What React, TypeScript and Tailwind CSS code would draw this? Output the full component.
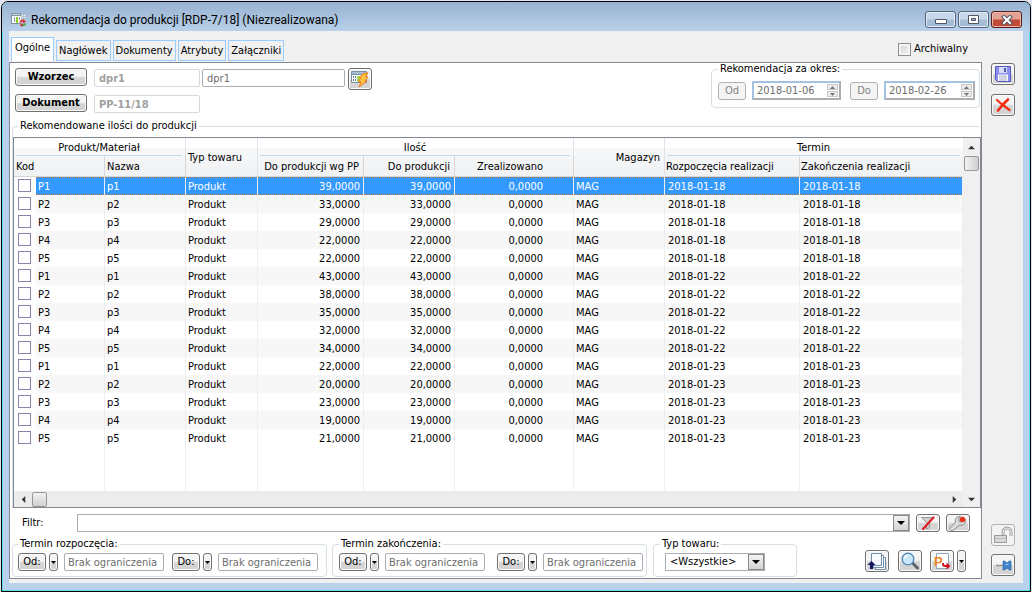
import React, { useState } from 'react';
import clsx from 'clsx';

const rows = [
  { kod: 'P1', wgPP: '39,0000', ilosc: '39,0000', start: '2018-01-18', end: '2018-01-18' },
  { kod: 'P2', wgPP: '33,0000', ilosc: '33,0000', start: '2018-01-18', end: '2018-01-18' },
  { kod: 'P3', wgPP: '29,0000', ilosc: '29,0000', start: '2018-01-18', end: '2018-01-18' },
  { kod: 'P4', wgPP: '22,0000', ilosc: '22,0000', start: '2018-01-18', end: '2018-01-18' },
  { kod: 'P5', wgPP: '22,0000', ilosc: '22,0000', start: '2018-01-18', end: '2018-01-18' },
  { kod: 'P1', wgPP: '43,0000', ilosc: '43,0000', start: '2018-01-22', end: '2018-01-22' },
  { kod: 'P2', wgPP: '38,0000', ilosc: '38,0000', start: '2018-01-22', end: '2018-01-22' },
  { kod: 'P3', wgPP: '35,0000', ilosc: '35,0000', start: '2018-01-22', end: '2018-01-22' },
  { kod: 'P4', wgPP: '32,0000', ilosc: '32,0000', start: '2018-01-22', end: '2018-01-22' },
  { kod: 'P5', wgPP: '34,0000', ilosc: '34,0000', start: '2018-01-22', end: '2018-01-22' },
  { kod: 'P1', wgPP: '22,0000', ilosc: '22,0000', start: '2018-01-23', end: '2018-01-23' },
  { kod: 'P2', wgPP: '20,0000', ilosc: '20,0000', start: '2018-01-23', end: '2018-01-23' },
  { kod: 'P3', wgPP: '23,0000', ilosc: '23,0000', start: '2018-01-23', end: '2018-01-23' },
  { kod: 'P4', wgPP: '19,0000', ilosc: '19,0000', start: '2018-01-23', end: '2018-01-23' },
  { kod: 'P5', wgPP: '21,0000', ilosc: '21,0000', start: '2018-01-23', end: '2018-01-23' },
];

const tabs = ['Nagłówek', 'Dokumenty', 'Atrybuty', 'Załączniki'];

const raised = 'rounded-[3px] border border-[#707070] bg-linear-to-b from-[#f4f4f4] from-45% to-[#d4d4d4] to-55% shadow-[inset_0_0_0_1px_#fafafa]';
const disabledBtn = 'h-[18px] w-7 rounded-[3px] border border-[#adb2b5] bg-[#f4f4f4] text-[#838383]';
const groupBox = 'min-w-0 rounded-[4px] border border-[#d5dfe5]';
const dateField = 'h-[18px] w-[100px] rounded-[2px] border border-[#abadb3] pl-[3px] placeholder:text-[#6d6d6d]';

function Arrow({ dir, className = 'h-2 w-2 text-black' }: { dir: 'up' | 'down' | 'left' | 'right'; className?: string }) {
  const paths = { up: 'M0 6 4 2 8 6Z', down: 'M0 2h8L4 6Z', left: 'M6 0v8L2 4Z', right: 'M2 0v8l4-4Z' };
  return (
    <svg viewBox="0 0 8 8" className={clsx('shrink-0', className)} fill="currentColor">
      <path d={paths[dir]} />
    </svg>
  );
}

function IconButton({ label, children, className = 'h-[22px]' }: { label: string; children: React.ReactNode; className?: string }) {
  return (
    <button aria-label={label} className={clsx('flex w-6 shrink-0 items-center justify-center', raised, className)}>
      {children}
    </button>
  );
}

function DropButton({ label, className = 'h-[18px]' }: { label: string; className?: string }) {
  return (
    <button aria-label={label} className={clsx('flex w-[9px] shrink-0 items-center justify-center', raised, className)}>
      <svg viewBox="0 0 5 3" className="h-[3px] w-[5px]"><path d="M0 0h5L2.5 3Z" /></svg>
    </button>
  );
}

function DateSpinner({ label, value, className }: { label: string; value: string; className: string }) {
  return (
    <div className={clsx('flex h-[19px] border-2 border-[#abadb3] border-t-[#a4c3e3] border-l-[#a4c3e3] bg-white p-px', className)}>
      <input aria-label={label} defaultValue={value} className="min-w-0 flex-1 pl-[2px] text-[#6d6d6d] outline-none" />
      <div className="flex w-[11px] flex-col gap-px">
        <button aria-label={`${label} +`} className="flex flex-1 items-center justify-center border border-[#c8c8c8] bg-[#ececec]">
          <svg viewBox="0 0 5 3" className="h-[3px] w-[5px]" fill="#777"><path d="M0 3h5L2.5 0Z" /></svg>
        </button>
        <button aria-label={`${label} -`} className="flex flex-1 items-center justify-center border border-[#c8c8c8] bg-[#ececec]">
          <svg viewBox="0 0 5 3" className="h-[3px] w-[5px]" fill="#777"><path d="M0 0h5L2.5 3Z" /></svg>
        </button>
      </div>
    </div>
  );
}

function RangeGroup({ title, className, gap }: { title: string; className: string; gap: string }) {
  return (
    <fieldset className={clsx(groupBox, 'h-[39px] w-[315px]', className)}>
      <legend className="px-[2px] leading-3">{title}</legend>
      <div className={clsx('flex items-center pt-[3px]', gap)}>
        <div className="flex">
          <button className={clsx('h-[18px] w-7', raised)}>Od:</button>
          <DropButton label={`${title} od`} className="mr-1.5 ml-[3px] h-[18px]" />
          <input aria-label={`${title} od data`} placeholder="Brak ograniczenia" className={dateField} />
        </div>
        <div className="flex">
          <button className={clsx('h-[18px] w-7', raised)}>Do:</button>
          <DropButton label={`${title} do`} className="mr-1.5 ml-[3px] h-[18px]" />
          <input aria-label={`${title} do data`} placeholder="Brak ograniczenia" className={dateField} />
        </div>
      </div>
    </fieldset>
  );
}

function WindowIcon() {
  return (
    <svg viewBox="0 0 16 14" className="h-[14px] w-4">
      <path d="M0 0h10v3H0Z" fill="#8296aa" />
      <path d="M1 1h8v1H1Z" fill="#c9d6e2" />
      <path d="M0 3h10v8H0Z" fill="#fff" />
      <path d="M0 3h1v8H0ZM0 10h10v1H0Z" fill="#7f90a2" />
      <path d="M3 4h1v5H3ZM8 4h1v3H8Z" fill="#8795a5" />
      <path d="M5 4h2v6H5Z" fill="#8ccf2c" />
      <path d="M10 1h5v6h-5Z" fill="#b3c1cf" />
      <path d="M11 2h1v1h-1ZM13 2h1v1h-1ZM11 4h1v1h-1ZM13 4h1v1h-1Z" fill="#f4f7fa" />
      <path d="M9 9.500Q10 7 13 8" fill="none" stroke="#d8383c" strokeWidth="2" />
      <path d="M12 6l3 2.500-3 2Z" fill="#d8383c" />
      <path d="M14.500 10.500Q13 13 10.500 12" fill="none" stroke="#4fa84a" strokeWidth="2" />
      <path d="M11.500 10v4L8.500 12Z" fill="#c93a3a" />
    </svg>
  );
}

function GenerateIcon() {
  return (
    <svg viewBox="0 0 18 18" className="h-[18px] w-[18px]">
      <path d="M.500 1.500h15v11H.500Z" fill="#fff" stroke="#7890a8" />
      <path d="M1 2h14v2H1Z" fill="#a8bfd6" />
      <path d="M1 4h14v1H1Z" fill="#7890a8" />
      <path d="M2 6h1v2H2ZM2 9h1v2H2ZM4 6h1v2H4ZM4 9h1v2H4Z" fill="#5b7896" />
      <path d="M6 6h3v6H6Z" fill="#a3d64a" />
      <path d="M12 3.500 17 3l-2.500 4h2.500l-3 4h2L8 17l2-5H7.500l2.500-4H8.500Z" fill="#fdc345" stroke="#ee7d1c" strokeLinejoin="round" />
    </svg>
  );
}

function SaveIcon() {
  return (
    <svg viewBox="0 0 18 18" className="h-[18px] w-[18px]">
      <path d="M1.500 1.500h15v15h-13l-2-2Z" fill="#8a8ff0" stroke="#5458b8" />
      <path d="M5 2h8v6H5Z" fill="#d9dcf8" />
      <path d="M10 3h2v4h-2Z" fill="#4d55ad" />
      <path d="M4 9.500h10V16H4Z" fill="#fff" />
      <path d="M5 11h8M5 13h8M5 15h8" stroke="#a5a8c4" />
    </svg>
  );
}

function CloseIcon() {
  return (
    <svg viewBox="0 0 18 18" className="h-[18px] w-[18px]" fill="none" stroke="#f22b12" strokeLinecap="round">
      <path d="M3 4 8 8.500 15.500 14" strokeWidth="2.200" />
      <path d="M14 3.500 9 8.500 4 14.500" strokeWidth="2.600" />
    </svg>
  );
}

function FilterOffIcon() {
  return (
    <svg viewBox="0 0 16 14" className="h-[14px] w-4">
      <path d="M1.500 1.500h12L9.500 6.500v5L6.500 13V6.500Z" fill="#cfcfcf" stroke="#9a9a9a" />
      <path d="M3 13 13.500 1.500" stroke="#e02424" strokeWidth="2.200" strokeLinecap="round" />
    </svg>
  );
}

function WrenchIcon() {
  return (
    <svg viewBox="0 0 20 16" className="h-4 w-5">
      <path d="M2 12.500 7.500 7.500C6.500 3.500 9 1 12.500 1.500L10.500 4l1 3 3.500-.5 2-2.500c2 4-1.500 7-5.500 6L5 15.500C3 16 1 14.500 2 12.500Z" fill="#dcdcdc" stroke="#8a8a8a" />
      <circle cx="14.500" cy="4.500" r="2.800" fill="#e8341c" />
    </svg>
  );
}

function LockIcon() {
  return (
    <svg viewBox="0 0 20 18" className="h-[18px] w-5">
      <path d="M10 9V6a4 4 0 0 1 8 0v4" fill="none" stroke="#a3a3a3" strokeWidth="3" />
      <path d="M10 9V6a4 4 0 0 1 8 0v4" fill="none" stroke="#ededed" />
      <path d="M1.500 9.500h12v7h-12Z" fill="#d9d9d9" stroke="#989898" />
      <path d="M2 12h11v1H2Z" fill="#bdbdbd" />
    </svg>
  );
}

function PinIcon() {
  return (
    <svg viewBox="0 0 18 14" className="h-[14px] w-[18px]">
      <path d="M2 7.500h7" stroke="#9a9a9a" strokeWidth="1.500" />
      <path d="M9 3h2l1 1.500h2L15 3h2v9h-2l-1-1.500h-2L11 12H9Z" fill="#3c83cc" stroke="#2a62a3" strokeWidth=".6" />
      <path d="M11.500 6.500h3" stroke="#a9cdf0" />
    </svg>
  );
}

function PagesIcon() {
  return (
    <svg viewBox="0 0 20 18" className="h-[18px] w-5">
      <path d="M8.500 5.500h10v12h-10Z" fill="#fff" stroke="#6f8ca8" />
      <path d="M6.500 3.500h10v12h-10Z" fill="#fff" stroke="#6f8ca8" />
      <path d="M4.500 1.500h10v12h-10Z" fill="#f7fbff" stroke="#6f8ca8" />
      <path d="M4.500 9 .500 13H3v4h3v-4h2.500Z" fill="#17145f" />
    </svg>
  );
}

function SearchIcon() {
  return (
    <svg viewBox="0 0 20 18" className="h-[18px] w-5">
      <path d="m12 10.500 5.500 5.500" stroke="#5b656f" strokeWidth="3" strokeLinecap="round" />
      <circle cx="8" cy="7" r="5.800" fill="#cbe7fb" stroke="#4b86b8" strokeWidth="1.300" />
      <path d="M4.500 6.500A3.500 3.500 0 0 1 8 3.500" fill="none" stroke="#fff" strokeWidth="1.500" />
    </svg>
  );
}

function ProductionIcon() {
  return (
    <svg viewBox="0 0 18 18" className="h-[18px] w-[18px]">
      <path d="M3.500 1.500h12v15h-12Z" fill="#fff" stroke="#8fa8c0" />
      <text x="1" y="14" fontSize="13" fontWeight="bold" fill="#ee8422" className="font-['Liberation_Sans',sans-serif]">P</text>
      <path d="M10 11v1q0 2 2 2h2" fill="none" stroke="#d0141c" strokeWidth="2" />
      <path d="M13.500 10.500v7l4-3.500Z" fill="#d0141c" />
    </svg>
  );
}

function HeaderGroup({ children }: { children: React.ReactNode }) {
  return <div className="mr-[3px] ml-[2px] h-[18px] border-b border-[#c3dbe6] text-center leading-4">{children}</div>;
}

export default function App() {
  const [selected, setSelected] = useState(0);

  return (
    <div className="flex min-h-screen bg-[#dfe5ec] font-['DejaVu_Sans_Condensed','DejaVu_Sans',sans-serif] text-[11px] leading-[14px] text-black">
      <div className="mx-px mt-px flex flex-1 flex-col rounded-t-[7px] border border-black bg-[#b9d1ea] shadow-[inset_0_0_0_1px_#5fdcf0]">
        <header className="flex h-[29px] shrink-0 items-center rounded-t-[6px] bg-linear-to-b from-[#97b2d0] to-[#b9d1ea] pt-1.5 pr-2 pl-[9px]">
          <WindowIcon />
          <h1 className="ml-1 flex-1 pt-px font-[Roboto,'Noto_Sans',sans-serif] text-[12px]">Rekomendacja do produkcji [RDP-7/18] (Niezrealizowana)</h1>
          <div className="flex gap-[2px]">
            <button aria-label="Minimalizuj" className="flex h-[17px] w-[31px] items-center justify-center rounded-[3px] border border-[#55677e] bg-linear-to-b from-[#c8d8ea] from-45% to-[#a5bcd5] to-55% shadow-[inset_0_0_0_1px_#e2ecf6]">
              <svg viewBox="0 0 12 6" className="mt-1 h-[6px] w-3"><path d="M.500.500h11v4H.500Z" fill="#fff" stroke="#535666" /></svg>
            </button>
            <button aria-label="Maksymalizuj" className="flex h-[17px] w-[31px] items-center justify-center rounded-[3px] border border-[#55677e] bg-linear-to-b from-[#c8d8ea] from-45% to-[#a5bcd5] to-55% shadow-[inset_0_0_0_1px_#e2ecf6]">
              <svg viewBox="0 0 11 9" className="h-[9px] w-[11px]"><path d="M.500.500h10v8H.500Z" fill="#fff" stroke="#535666" /><path d="M3.500 3.500h4v2h-4Z" fill="#9bb4cf" stroke="#535666" /></svg>
            </button>
            <button aria-label="Zamknij" className="flex h-[17px] w-[31px] items-center justify-center rounded-[3px] border border-[#5c1a14] bg-linear-to-b from-[#e2a193] from-45% to-[#c04a35] to-55% shadow-[inset_0_0_0_1px_#e9b8ae]">
              <svg viewBox="0 0 12 10" className="h-[10px] w-3" fill="none" strokeLinecap="square">
                <path d="m3 2 6 6M9 2 3 8" stroke="#535666" strokeWidth="4" />
                <path d="m3 2 6 6M9 2 3 8" stroke="#fff" strokeWidth="2" />
              </svg>
            </button>
          </div>
        </header>

        <div className="mx-[7px] mb-2 flex flex-1 bg-[#f0f0f0]">
          <main className="flex min-w-0 flex-1 flex-col pb-1">
            <div className="flex h-[31px] items-end justify-between pr-[14px] pl-[2px]">
              <div role="tablist" className="flex items-end gap-[2px] pb-px">
                <button role="tab" aria-selected="true" className="h-6 w-[43px] border border-b-0 border-[#99ccff] bg-white pb-1 text-center">Ogólne</button>
                {tabs.map((tab) => (
                  <button key={tab} role="tab" aria-selected="false" className="h-[21px] border border-[#99ccff] px-[2px]">{tab}</button>
                ))}
              </div>
              <label className="flex items-center gap-[3px] pb-1.5">
                <input type="checkbox" className="h-[13px] w-[13px] appearance-none border border-[#8e8f8f] bg-linear-to-br from-[#cfd3d8] to-[#f6f6f6] shadow-[inset_0_0_0_2px_#f4f4f4]" />
                Archiwalny
              </label>
            </div>

            <div className="flex flex-1 flex-col border border-[#828790] bg-white">
              <div className="flex h-[57px] justify-between pr-px pl-[5px]">
                <div className="flex flex-col gap-1 pt-[5px]">
                  <div className="flex h-[22px] items-start">
                    <button className={clsx('h-[18px] w-[72px] font-bold', raised)}>Wzorzec</button>
                    <input aria-label="Wzorzec" defaultValue="dpr1" className="mt-px ml-[7px] h-[18px] w-[106px] rounded-[2px] border border-[#d5d9de] pl-1 font-bold text-[#a0a0a0]" />
                    <input aria-label="Nazwa wzorca" defaultValue="dpr1" className="mt-px ml-[2px] h-[18px] w-[143px] rounded-[2px] border border-[#abadb3] pl-1 text-[#6d6d6d]" />
                    <div className="ml-[3px]"><IconButton label="Generuj"><GenerateIcon /></IconButton></div>
                  </div>
                  <div className="flex h-[22px] items-start">
                    <button className={clsx('h-[18px] w-[72px] font-bold', raised)}>Dokument</button>
                    <input aria-label="Dokument" defaultValue="PP-11/18" className="mt-px ml-[7px] h-[18px] w-[106px] rounded-[2px] border border-[#d5d9de] pl-1 font-bold text-[#a0a0a0]" />
                  </div>
                </div>
                <fieldset className={clsx(groupBox, 'h-[45px] w-[269px] pl-1.5')}>
                  <legend className="px-[2px] leading-3">Rekomendacja za okres:</legend>
                  <div className="flex items-center pt-1.5">
                    <button disabled className={disabledBtn}>Od</button>
                    <DateSpinner label="Okres od" value="2018-01-06" className="ml-1.5 w-[89px]" />
                    <button disabled className={clsx('ml-[9px]', disabledBtn)}>Do</button>
                    <DateSpinner label="Okres do" value="2018-02-26" className="ml-1.5 w-[91px]" />
                  </div>
                </fieldset>
              </div>

              <fieldset className="ml-[2px] flex min-w-0 flex-1 flex-col rounded-t-[4px] border-t border-l border-[#d5dfe5]">
                <legend className="ml-[5px] px-[2px] leading-3">Rekomendowane ilości do produkcji</legend>
                <div className="mt-[5px] flex flex-1 flex-col border border-[#828790]">
                  <div className="flex flex-1">
                    <div className="min-w-0 flex-1">
                      <table className="w-full table-fixed border-separate border-spacing-0">
                        <colgroup>
                          <col className="w-[91px]" />
                          <col className="w-[81px]" />
                          <col className="w-[72px]" />
                          <col className="w-[106px]" />
                          <col className="w-[91px]" />
                          <col className="w-[119px]" />
                          <col className="w-[91px]" />
                          <col className="w-[135px]" />
                          <col />
                        </colgroup>
                        <thead className="bg-linear-to-b from-white from-25% via-[#f7f8fa] via-26% to-[#f0f1f3] text-left [&_th]:border-[#e2e3ea] [&_th]:p-0 [&_th]:font-normal [&_th>div]:pt-0.5">
                          <tr className="h-[18px]">
                            <th colSpan={2} className="border-r"><HeaderGroup>Produkt/Materiał</HeaderGroup></th>
                            <th rowSpan={2} className="border-r border-b"><div className="pl-[2px]">Typ towaru</div></th>
                            <th colSpan={3} className="border-r"><HeaderGroup>Ilość</HeaderGroup></th>
                            <th rowSpan={2} className="border-r border-b"><div className="pr-1 text-right">Magazyn</div></th>
                            <th colSpan={2}><HeaderGroup>Termin</HeaderGroup></th>
                          </tr>
                          <tr className="h-[21px] [&>th]:border-b [&>th]:border-[#d5d5d5]">
                            <th className="border-r"><div className="pl-[2px]">Kod</div></th>
                            <th className="border-r"><div className="pl-[2px]">Nazwa</div></th>
                            <th className="border-r"><div className="pr-1 text-right">Do produkcji wg PP</div></th>
                            <th className="border-r"><div className="pr-1 text-right">Do produkcji</div></th>
                            <th className="border-r"><div className="pr-[30px] text-right">Zrealizowano</div></th>
                            <th className="border-r"><div className="pl-px">Rozpoczęcia realizacji</div></th>
                            <th><div className="pl-px">Zakończenia realizacji</div></th>
                          </tr>
                        </thead>
                        <tbody className="[&_td]:border-r [&_td]:border-[#eeeeee] [&_td]:p-0">
                          {rows.map((row, i) => {
                            const active = i === selected;
                            const cell = clsx(
                              'flex h-[18px] items-center pt-0.5 whitespace-nowrap',
                              active ? 'border-y border-dotted border-[#b87a48] bg-[#3399ff] text-white' : i % 2 === 1 && 'bg-[#f7f7f7]'
                            );
                            return (
                              <tr key={i} onClick={() => setSelected(i)}>
                                <td>
                                  <div className="flex h-[18px] items-start pl-1">
                                    <input type="checkbox" aria-label={`${row.kod} ${row.start}`} className="mt-[2px] h-[13px] w-[13px] shrink-0 appearance-none border border-[#8a82ad] bg-white" />
                                    <div className={clsx('ml-[5px] flex-1 pl-[2px]', cell)}>{row.kod}</div>
                                  </div>
                                </td>
                                <td><div className={clsx('pl-[2px]', cell)}>{row.kod.toLowerCase()}</div></td>
                                <td><div className={clsx('pl-[2px]', cell)}>Produkt</div></td>
                                <td><div className={clsx('justify-end pr-[3px]', cell)}>{row.wgPP}</div></td>
                                <td><div className={clsx('justify-end pr-[3px]', cell)}>{row.ilosc}</div></td>
                                <td><div className={clsx('justify-end pr-[30px]', cell)}>0,0000</div></td>
                                <td><div className={clsx('pl-[2px]', cell)}>MAG</div></td>
                                <td><div className={clsx('pl-[3px]', cell)}>{row.start}</div></td>
                                <td><div className={clsx('pl-[3px]', cell)}>{row.end}</div></td>
                              </tr>
                            );
                          })}
                          <tr aria-hidden="true" className="h-[43px]">
                            {Array.from({ length: 9 }, (_, i) => <td key={i} />)}
                          </tr>
                        </tbody>
                      </table>
                    </div>
                    <div className="flex w-[17px] flex-col bg-[#f0f0f0]">
                      <button aria-label="W górę" className="flex h-[18px] items-center justify-center"><Arrow dir="up" className="h-[7px] w-[7px] text-[#333]" /></button>
                      <div className="mx-px h-[15px] rounded-[2px] border border-[#979797] bg-linear-to-r from-[#f3f3f3] to-[#cfcfcf]" />
                    </div>
                  </div>
                  <div className="flex h-4 items-center bg-[#ececec]">
                    <button aria-label="W lewo" className="flex w-[18px] items-center justify-center"><Arrow dir="left" className="h-[7px] w-[7px] text-[#333]" /></button>
                    <div className="h-[15px] w-[15px] rounded-[2px] border border-[#979797] bg-linear-to-b from-[#f3f3f3] to-[#cfcfcf]" />
                    <div className="flex-1" />
                    <button aria-label="W prawo" className="flex w-[18px] items-center justify-center"><Arrow dir="right" className="h-[7px] w-[7px] text-[#333]" /></button>
                    <button aria-label="W dół" className="flex h-full w-[17px] items-center justify-center bg-[#f0f0f0]"><Arrow dir="down" className="h-[7px] w-[7px] text-[#333]" /></button>
                  </div>
                </div>
              </fieldset>

              <div className="mt-1.5 flex items-center pr-[11px] pl-3">
                <label htmlFor="filtr" className="w-[55px]">Filtr:</label>
                <div className="flex h-[18px] min-w-0 flex-1 border border-[#abadb3]">
                  <input id="filtr" className="min-w-0 flex-1 px-1" />
                  <button aria-label="Rozwiń filtr" className="flex w-4 items-center justify-center border border-[#8a8a8a] bg-linear-to-b from-[#f4f4f4] to-[#d4d4d4]"><Arrow dir="down" /></button>
                </div>
                <div className="ml-1.5 flex gap-1.5">
                  <IconButton label="Wyłącz filtr" className="h-[18px]"><FilterOffIcon /></IconButton>
                  <IconButton label="Konstruktor filtra" className="h-[18px]"><WrenchIcon /></IconButton>
                </div>
              </div>

              <div className="mt-1.5 mb-px flex items-end pr-[15px] pl-[2px]">
                <RangeGroup title="Termin rozpoczęcia:" className="pl-[5px]" gap="gap-2" />
                <RangeGroup title="Termin zakończenia:" className="ml-[5px] pl-1.5" gap="gap-3" />
                <fieldset className={clsx(groupBox, 'ml-[6px] h-[39px] w-36 pl-[11px]')}>
                  <legend className="-ml-[5px] px-[2px] leading-3">Typ towaru:</legend>
                  <div className="pt-[3px]">
                    <div className="relative h-[18px] w-[100px]">
                      <select aria-label="Typ towaru" className="h-full w-full appearance-none border border-[#abadb3] bg-white pl-1">
                        <option>&lt;Wszystkie&gt;</option>
                      </select>
                      <span className="pointer-events-none absolute top-px right-px bottom-px flex w-4 items-center justify-center border border-[#8a8a8a] bg-linear-to-b from-[#f4f4f4] to-[#d4d4d4]"><Arrow dir="down" /></span>
                    </div>
                  </div>
                </fieldset>
                <div className="mb-[5px] ml-auto flex">
                  <IconButton label="Generuj dokumenty"><PagesIcon /></IconButton>
                  <div className="ml-[9px]"><IconButton label="Podgląd"><SearchIcon /></IconButton></div>
                  <div className="ml-2"><IconButton label="Produkcja"><ProductionIcon /></IconButton></div>
                  <DropButton label="Więcej" className="ml-[3px] h-[22px]" />
                </div>
              </div>
            </div>
          </main>

          <aside className="flex w-[41px] shrink-0 flex-col items-center justify-between pt-8 pb-[7px]">
            <div className="flex flex-col gap-[9px]">
              <IconButton label="Zapisz"><SaveIcon /></IconButton>
              <IconButton label="Anuluj"><CloseIcon /></IconButton>
            </div>
            <div className="flex flex-col gap-2">
              <button disabled aria-label="Odblokuj" className="flex h-[22px] w-6 items-center justify-center rounded-[3px] border border-[#adb2b5] bg-[#f4f4f4]"><LockIcon /></button>
              <IconButton label="Przypnij"><PinIcon /></IconButton>
            </div>
          </aside>
        </div>
      </div>
    </div>
  );
}
